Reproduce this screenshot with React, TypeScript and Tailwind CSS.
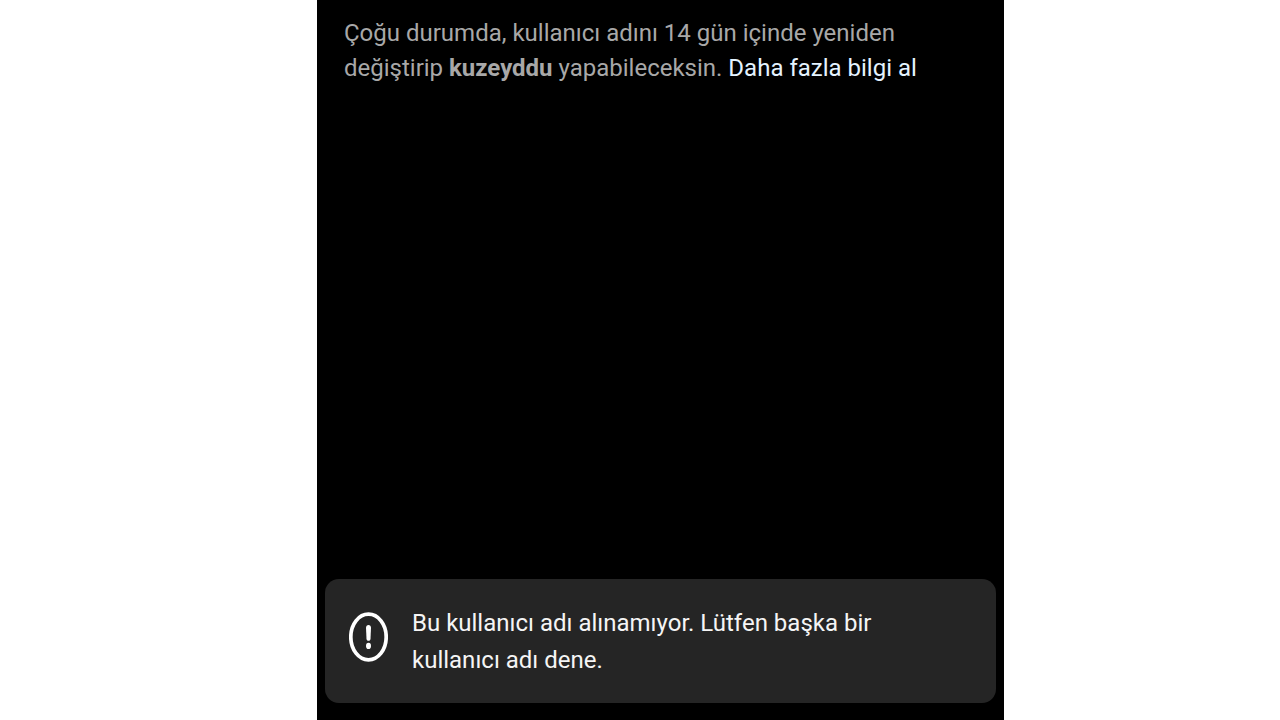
import React from 'react';

interface ToastProps {
  message: string;
  icon: React.ReactNode;
}

const AlertIcon: React.FC = () => (
  <svg
    className="h-[50px] w-[39px] shrink-0"
    viewBox="0 0 39 50"
    fill="none"
    aria-hidden="true"
  >
    <ellipse cx="19.5" cy="25" rx="17.7" ry="22.8" stroke="white" strokeWidth="3.7" />
    <path
      d="M17 15.8c0-1.7 1-2.8 2.5-2.8s2.5 1.1 2.5 2.8l-.5 10.9c-.1 1.3-.8 2.1-2 2.100s-1.9-.8-2-2.1z"
      fill="white"
    />
    <ellipse cx="19.5" cy="33.9" rx="2.5" ry="3.100" fill="white" />
  </svg>
);

const Toast: React.FC<ToastProps> = ({ message, icon }) => {
  return (
    <div
      role="alert"
      className="flex items-start gap-6 rounded-[14px] bg-[#252525] px-6 pt-[26px] pb-6"
    >
      <div className="flex h-[64px] items-center">{icon}</div>
      <p className="max-w-[480px] text-2xl leading-[37px] text-[#f5f5f5]">{message}</p>
    </div>
  );
};

const App: React.FC = () => {
  return (
    <div className="min-h-screen bg-white font-['Roboto',sans-serif]">
      <main className="mr-[276px] ml-[317px] flex min-h-screen flex-col justify-between bg-black px-2 pt-4 pb-[17px]">
        <p className="max-w-[640px] px-[19px] text-2xl leading-[35px] text-[#a8a8a8]">
          Çoğu durumda, kullanıcı adını 14 gün içinde yeniden değiştirip{' '}
          <strong className="font-bold">kuzeyddu</strong> yapabileceksin.{' '}
          <a href="#" className="text-[#e4f3ff]">
            Daha fazla bilgi al
          </a>
        </p>
        <Toast
          message="Bu kullanıcı adı alınamıyor. Lütfen başka bir kullanıcı adı dene."
          icon={<AlertIcon />}
        />
      </main>
    </div>
  );
};

export default App;
